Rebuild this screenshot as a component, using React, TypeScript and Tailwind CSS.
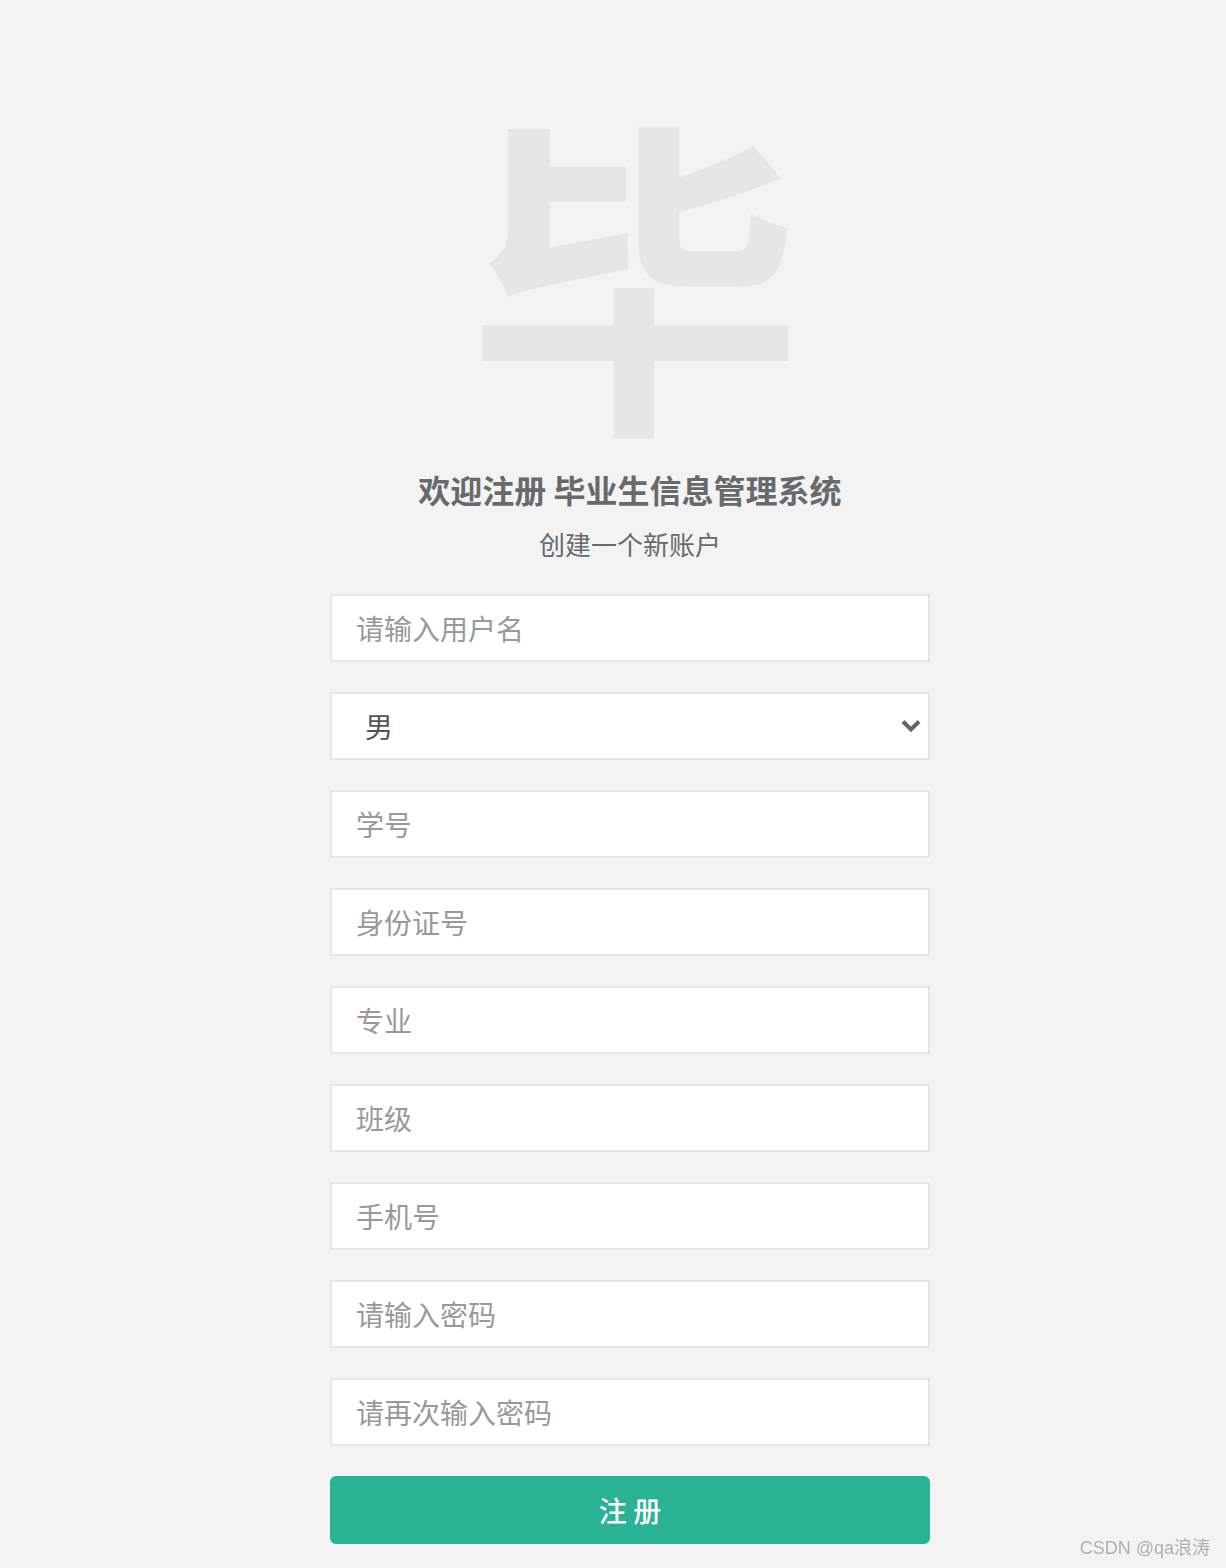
import React, { useState } from 'react';

const fields = ['学号', '身份证号', '专业', '班级', '手机号'];

const App: React.FC = () => {
  const [gender, setGender] = useState('男');

  const inputCls =
    'block w-full h-[68px] border-2 border-[#e5e6e7] bg-white px-[24px] text-[28px] text-[#555] placeholder-[#999] outline-none';

  return (
    <div
      className="min-h-screen bg-[#f3f3f3] flex flex-col items-center pl-[34px] pt-[95px]"
      style={{ fontFamily: '"Noto Sans CJK SC", "Noto Sans", sans-serif' }}
    >
      <h1 className="text-[335px] font-bold leading-none text-[#e6e6e6] tracking-[-10px] select-none">毕</h1>

      <h3 className="mt-[37px] text-[32px] font-bold leading-[44px] text-[#676a6c]">欢迎注册 毕业生信息管理系统</h3>
      <p className="mt-[15px] text-[26px] leading-[36px] text-[#676a6c]">创建一个新账户</p>

      <form className="mt-[32px] w-[600px] flex flex-col gap-[30px]" onSubmit={(e) => e.preventDefault()}>
        <input className={inputCls} placeholder="请输入用户名" />

        <div className="relative">
          <select
            value={gender}
            onChange={(e) => setGender(e.target.value)}
            className="block w-full h-[68px] appearance-none border-2 border-[#e5e6e7] bg-white pl-[33px] pr-12 text-[28px] text-[#555] outline-none"
          >
            <option>男</option>
            <option>女</option>
          </select>
          <svg
            className="pointer-events-none absolute right-[9px] top-1/2 -translate-y-1/2"
            width="20"
            height="13"
            viewBox="0 0 20 13"
          >
            <polyline points="2,2 10,10 18,2" fill="none" stroke="#666" strokeWidth="4" />
          </svg>
        </div>

        {fields.map((f) => (
          <input key={f} className={inputCls} placeholder={f} />
        ))}

        <input type="password" className={inputCls} placeholder="请输入密码" />
        <input type="password" className={inputCls} placeholder="请再次输入密码" />

        <button
          type="submit"
          className="h-[68px] w-full rounded-[6px] bg-[#29b394] text-[28px] font-medium text-white"
        >
          注 册
        </button>
      </form>

      <div
        className="fixed bottom-[6px] right-[16px] text-[18px] text-[#b0b0b0]"
        style={{ fontFamily: '"Liberation Sans", "Noto Sans CJK SC", sans-serif' }}
      >
        CSDN @qa浪涛
      </div>
    </div>
  );
};

export default App;
